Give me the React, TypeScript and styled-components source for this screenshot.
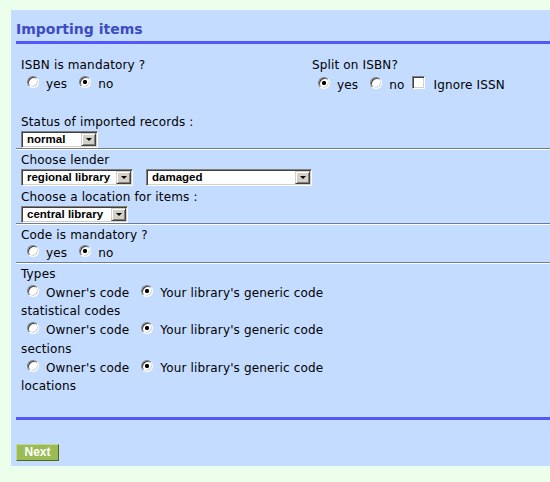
import React from 'react';
import styled, { createGlobalStyle, css } from 'styled-components';

const GlobalStyle = createGlobalStyle`
  html, body { margin: 0; padding: 0; background: #ebffeb; overflow: hidden; }
  body {
    font-family: "DejaVu Sans", Verdana, sans-serif;
    font-size: 12px;
    letter-spacing: 0.15px;
    color: #000;
  }
`;

const Page = styled.div`
  width: 550px;
  box-sizing: border-box;
  padding: 10px 0 16px 11px;
  overflow: hidden;
`;

const Panel = styled.div`
  width: 620px;
  box-sizing: border-box;
  background: #c4dcff;
  padding: 0 0 5px 5px;
`;

const Title = styled.h1`
  margin: 0;
  padding: 9px 0 2px 0;
  font-size: 14px;
  line-height: 20px;
  font-weight: bold;
  letter-spacing: 0;
  color: #3c4bc3;
  border-bottom: 3px solid #5656ff;
`;

const TopGrid = styled.div`
  display: grid;
  grid-template-columns: 291px 1fr;
  margin: 12px 0 17px 0;
  padding-left: 5px;
`;

const Section = styled.div<{ $sep?: boolean }>`
  padding: 1px 0 0 5px;
  ${(p) =>
    p.$sep &&
    css`
      border-bottom: 1px solid #6e7d96;
      box-shadow: 0 1px 0 #ffffff;
      margin-bottom: 1px;
    `}
`;

const Label = styled.div`
  line-height: 18px;
  white-space: nowrap;
`;

const OptionRow = styled.div<{ $tall?: boolean }>`
  padding-left: 6px;
  white-space: nowrap;
  ${(p) =>
    p.$tall
      ? css`
          padding-top: 2px;
          line-height: 17.5px;
        `
      : css`
          padding-top: 1px;
          line-height: 17px;
        `}
`;

const Choice = styled.label<{ $after?: number }>`
  margin-right: ${(p) => (p.$after ?? 12)}px;
`;

const Radio = styled.input.attrs({ type: 'radio' })`
  appearance: none;
  -webkit-appearance: none;
  display: inline-block;
  box-sizing: border-box;
  width: 12px;
  height: 12px;
  margin: 0 7px 0 0;
  padding: 0;
  border-radius: 50%;
  border: 1px solid;
  border-color: #808080 #ffffff #ffffff #808080;
  background: #ffffff;
  box-shadow: inset 1px 1px 0 #404040, inset -1px -1px 0 #d4d0c8;
  vertical-align: baseline;
  &:checked {
    background: radial-gradient(circle, #000 0 1.8px, #fff 2.4px);
  }
`;

const Checkbox = styled.input.attrs({ type: 'checkbox' })`
  appearance: none;
  -webkit-appearance: none;
  display: inline-block;
  box-sizing: border-box;
  width: 13px;
  height: 13px;
  margin: 0 8px 0 0;
  padding: 0;
  border: 1px solid;
  border-color: #808080 #ffffff #ffffff #808080;
  background: #ffffff;
  box-shadow: inset 1px 1px 0 #404040, inset -1px -1px 0 #d4d0c8;
  vertical-align: baseline;
`;

const SelectRow = styled.div`
  display: flex;
  gap: 13px;
  margin-bottom: 2px;
  &:last-child {
    margin-bottom: 0;
  }
`;

const SelectBox = styled.div<{ $w: number }>`
  width: ${(p) => p.$w}px;
  height: 17px;
  box-sizing: border-box;
  display: flex;
  background: #ffffff;
  border: 1px solid;
  border-color: #808080 #ffffff #ffffff #808080;
  box-shadow: inset 1px 1px 0 #404040, inset -1px -1px 0 #d4d0c8;
  padding: 1px;
`;

const SelectValue = styled.span`
  flex: 1;
  padding-left: 4px;
  font-family: "Liberation Sans", Arial, sans-serif;
  font-weight: bold;
  font-size: 11.5px;
  letter-spacing: 0;
  line-height: 13px;
  white-space: nowrap;
  overflow: hidden;
`;

const SelectButton = styled.span`
  width: 15px;
  height: 13px;
  box-sizing: border-box;
  display: flex;
  align-items: center;
  justify-content: center;
  background: #d4d0c8;
  border: 1px solid;
  border-color: #d4d0c8 #404040 #404040 #d4d0c8;
  box-shadow: inset 1px 1px 0 #ffffff, inset -1px -1px 0 #808080;
  &::after {
    content: '';
    width: 0;
    height: 0;
    border-left: 3px solid transparent;
    border-right: 3px solid transparent;
    border-top: 3px solid #000;
    margin-top: 1px;
  }
`;

const BottomBar = styled.div`
  margin-top: 22px;
  height: 3px;
  background: #5656ff;
`;

const NextButton = styled.button`
  display: block;
  margin-top: 24px;
  width: 43px;
  height: 17px;
  box-sizing: border-box;
  padding: 0;
  background: #9bbb55;
  color: #ffffff;
  font-family: "Liberation Sans", Arial, sans-serif;
  font-weight: bold;
  font-size: 12px;
  letter-spacing: 0;
  line-height: 15px;
  text-align: center;
  border: 1px solid;
  border-color: #c0d79a #4e661e #4e661e #c0d79a;
  cursor: pointer;
`;

const Select: React.FC<{ width: number; value: string }> = ({ width, value }) => (
  <SelectBox $w={width}>
    <SelectValue>{value}</SelectValue>
    <SelectButton />
  </SelectBox>
);

const CodeChoice: React.FC<{ name: string }> = ({ name }) => (
  <OptionRow $tall>
    <Choice>
      <Radio name={name} />
      Owner's code
    </Choice>
    <Choice>
      <Radio name={name} defaultChecked />
      Your library's generic code
    </Choice>
  </OptionRow>
);

export default function App() {
  return (
    <>
      <GlobalStyle />
      <Page>
        <Panel>
          <Title>Importing items</Title>
          <TopGrid>
            <div>
              <Label>ISBN is mandatory ?</Label>
              <OptionRow $tall>
                <Choice>
                  <Radio name="isbn" />
                  yes
                </Choice>
                <Choice>
                  <Radio name="isbn" defaultChecked />
                  no
                </Choice>
              </OptionRow>
            </div>
            <div>
              <Label>Split on ISBN?</Label>
              <OptionRow $tall>
                <Choice>
                  <Radio name="split" defaultChecked />
                  yes
                </Choice>
                <Choice $after={8}>
                  <Radio name="split" />
                  no
                </Choice>
                <Choice>
                  <Checkbox />
                  Ignore ISSN
                </Choice>
              </OptionRow>
            </div>
          </TopGrid>

          <Section $sep>
            <Label>Status of imported records :</Label>
            <SelectRow>
              <Select width={77} value="normal" />
            </SelectRow>
          </Section>

          <Section $sep>
            <Label>Choose lender</Label>
            <SelectRow>
              <Select width={112} value="regional library" />
              <Select width={166} value="damaged" />
            </SelectRow>
            <Label>Choose a location for items :</Label>
            <SelectRow>
              <Select width={107} value="central library" />
            </SelectRow>
          </Section>

          <Section $sep>
            <Label>Code is mandatory ?</Label>
            <OptionRow>
              <Choice>
                <Radio name="code" />
                yes
              </Choice>
              <Choice>
                <Radio name="code" defaultChecked />
                no
              </Choice>
            </OptionRow>
          </Section>

          <Section>
            <Label>Types</Label>
            <CodeChoice name="types" />
            <Label>statistical codes</Label>
            <CodeChoice name="stat" />
            <Label>sections</Label>
            <CodeChoice name="sections" />
            <Label>locations</Label>
          </Section>

          <BottomBar />
          <NextButton type="button">Next</NextButton>
        </Panel>
      </Page>
    </>
  );
}
